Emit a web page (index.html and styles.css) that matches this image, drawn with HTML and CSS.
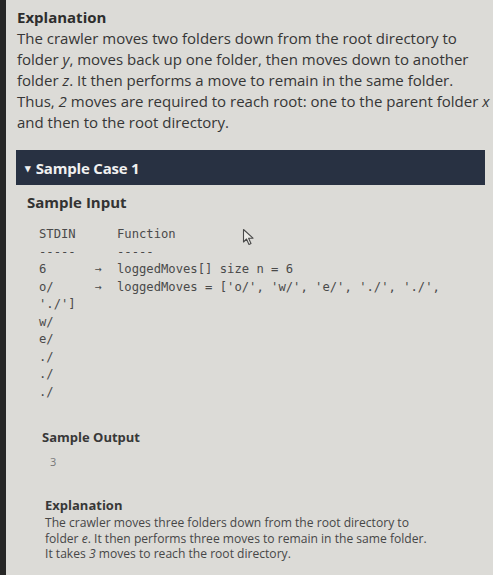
FILE: index.html
```html
<!DOCTYPE html>
<html>
<head>
<meta charset="utf-8">
<link rel="stylesheet" href="styles.css">
</head>
<body>
<div class="screen">
  <section class="explain">
    <h3 class="title">Explanation</h3>
    <p class="text">The crawler moves two folders down from the root directory to<br>folder <i>y</i>, moves back up one folder, then moves down to another<br>folder <i>z</i>. It then performs a move to remain in the same folder.<br>Thus, <i>2</i> moves are required to reach root: one to the parent folder <i>x</i><br>and then to the root directory.</p>
  </section>

  <section class="case">
    <div class="case-bar"><span class="caret">&#9662;</span>Sample Case 1</div>
    <h4 class="case-title">Sample Input</h4>
    <div class="code-box">
      <div class="row"><span class="c1">STDIN</span><span class="c2"></span><span>Function</span></div>
      <div class="row"><span class="c1">-----</span><span class="c2"></span><span>-----</span></div>
      <div class="row"><span class="c1">6</span><span class="c2">&#8594;</span><span>loggedMoves[] size n = 6</span></div>
      <div class="row"><span class="c1">o/</span><span class="c2">&#8594;</span><span>loggedMoves = ['o/', 'w/', 'e/', './', './',</span></div>
      <div class="row">'./']</div>
      <div class="row">w/</div>
      <div class="row">e/</div>
      <div class="row">./</div>
      <div class="row">./</div>
      <div class="row">./</div>
      <svg class="cursor" width="14" height="18" viewBox="0 0 14 18"><path d="M1.5 1.5 L1.5 14 L4.5 11 L7 16.5 L9 15.5 L6.6 10.2 L11 10.2 Z" fill="#ecebe7" stroke="#4a4a4a" stroke-width="1.1" stroke-linejoin="round"/></svg>
    </div>

    <div class="output">
      <h4 class="out-title">Sample Output</h4>
      <div class="out-code">3</div>
      <h4 class="sub-title">Explanation</h4>
      <p class="sub-text">The crawler moves three folders down from the root directory to folder <i>e</i>. It then performs three moves to remain in the same folder. It takes <i>3</i> moves to reach the root directory.</p>
    </div>
  </section>
</div>
</body>
</html>
```
FILE: styles.css
```css
html, body {
  margin: 0;
  padding: 0;
  background: #262626;
}
.screen {
  margin-left: 6px;
  height: 575px;
  overflow: hidden;
  background: #dcdbd7;
  color: #363636;
  font-family: "Open Sans", "Noto Sans", sans-serif;
}
.explain {
  padding: 6px 0 0 11px;
}
.title {
  margin: 0;
  font-size: 15px;
  line-height: 22px;
  font-weight: 700;
  color: #2d2d2d;
}
.text {
  margin: 0;
  font-size: 15px;
  line-height: 21px;
  color: #363636;
  white-space: nowrap;
}
.case {
  margin: 17px 8px 0 10px;
}
.case-bar {
  height: 35px;
  display: flex;
  align-items: center;
  background: #283142;
  color: #f0f0f0;
  font-weight: 700;
  font-size: 15px;
  letter-spacing: -0.2px;
  padding-left: 9px;
}
.caret {
  font-size: 11px;
  margin-right: 5px;
}
.case-title {
  margin: 6px 0 0 11px;
  font-size: 15px;
  line-height: 22px;
  font-weight: 700;
  color: #333;
}
.code-box {
  position: relative;
  margin: 13px 0 0 23px;
  font-family: "DejaVu Sans Mono", "Liberation Mono", monospace;
  font-size: 12.2px;
  line-height: 17.5px;
  color: #4a4a4a;
}
.row {
  display: flex;
  height: 17.5px;
  white-space: pre;
}
.c1 {
  width: 56px;
}
.c2 {
  width: 22px;
  font-size: 11.5px;
}
.cursor {
  position: absolute;
  left: 203px;
  top: 2px;
}
.output {
  margin: 27px 0 0 26px;
}
.out-title {
  margin: 0;
  font-size: 13px;
  line-height: 18px;
  font-weight: 700;
  color: #383838;
}
.out-code {
  margin: 9px 0 0 8px;
  font-size: 11px;
  line-height: 14px;
  color: #777;
}
.sub-title {
  margin: 28px 0 0 3px;
  font-size: 13px;
  line-height: 16px;
  font-weight: 700;
  color: #383838;
}
.sub-text {
  margin: 2px 0 0 3px;
  width: 386px;
  font-size: 12.1px;
  line-height: 15.5px;
  color: #474747;
}
```
